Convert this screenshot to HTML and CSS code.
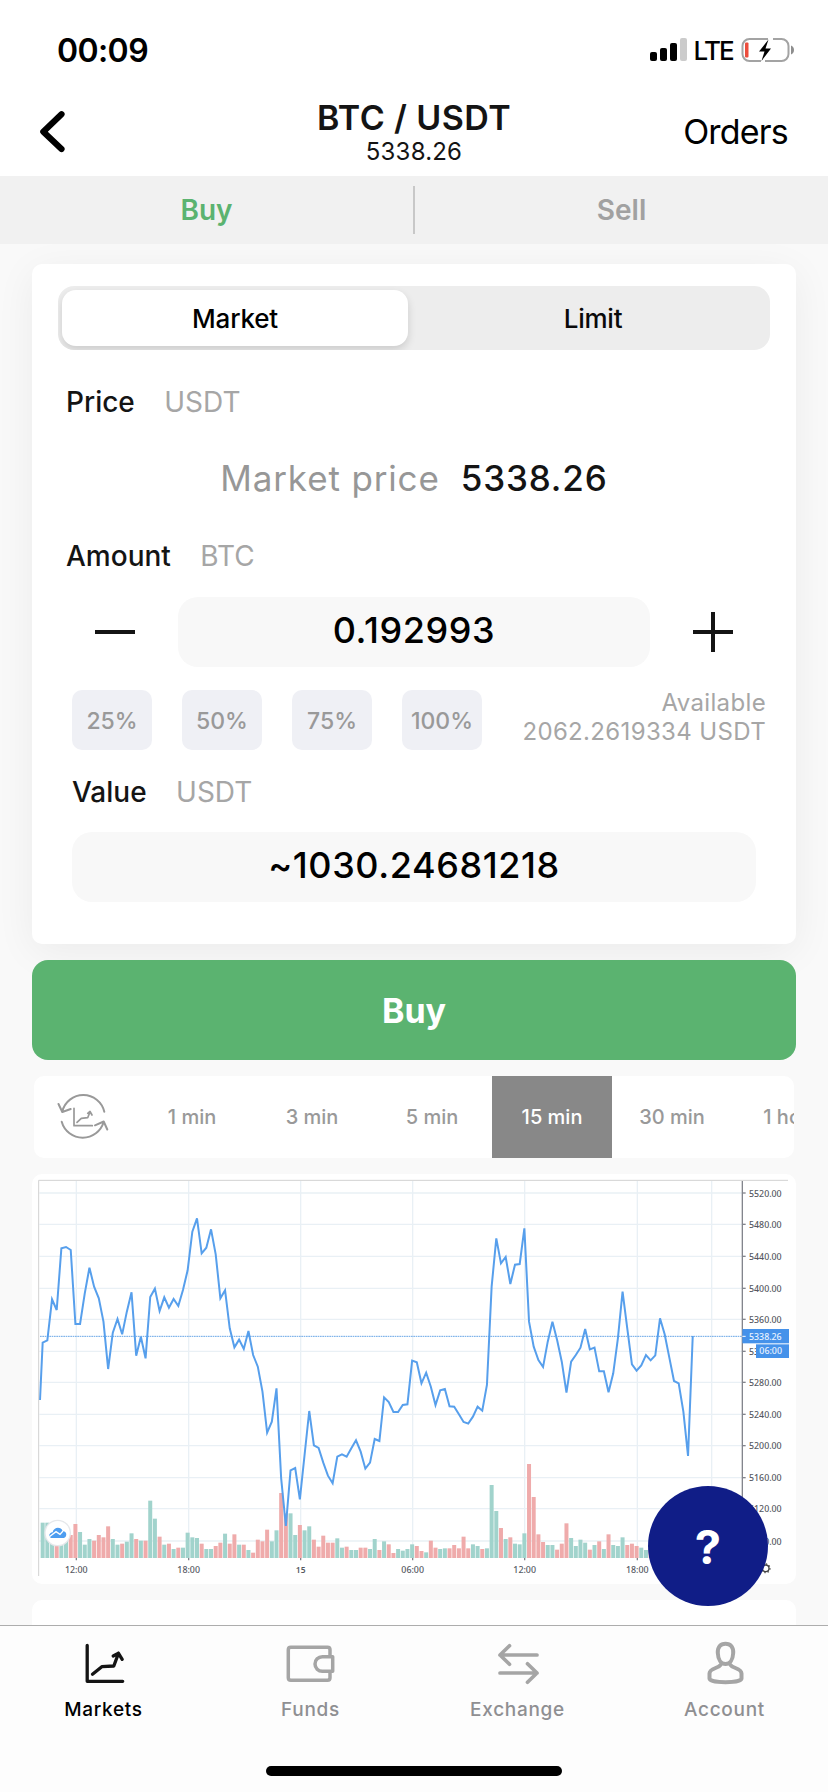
FILE: index.html
```html
<!DOCTYPE html>
<html lang="en">
<head>
<meta charset="UTF-8">
<meta name="viewport" content="width=device-width, initial-scale=1.0">
<title>BTC / USDT</title>
<link rel="stylesheet" href="styles.css">
</head>
<body>

<div class="status-bar">
  <span class="clock">00:09</span>
  <div class="status-icons">
    <svg class="signal" width="37" height="24" viewBox="0 0 37 24">
      <rect x="0" y="14" width="7" height="9" rx="2"/>
      <rect x="10" y="10" width="7" height="13" rx="2"/>
      <rect x="20" y="5" width="7" height="18" rx="2"/>
      <rect x="30" y="0" width="7" height="23" rx="2" fill="#cbcbcb"/>
    </svg>
    <span class="network">LTE</span>
    <svg class="battery" width="54" height="26" viewBox="0 0 54 26">
      <path d="M20 24H8.500a7 7 0 0 1-7-7V9a7 7 0 0 1 7-7H27M32 2h8.500a7 7 0 0 1 7 7v8a7 7 0 0 1-7 7H24" fill="none" stroke="#a3a3a3" stroke-width="2"/>
      <path d="M50 8.500c4 1.500 4 7.500 0 9z" fill="#8e8e8e"/>
      <rect x="4" y="5.500" width="3.500" height="15" rx="1" fill="#ec4d3d"/>
      <path d="M27.500 2.500L18 14.500h5.500L20.500 24 30 11.500h-5.500z" fill="#000"/>
    </svg>
  </div>
</div>

<header class="header">
  <button class="back">
    <svg width="28" height="42" viewBox="0 0 28 42"><path d="M23.500 3.200L5.300 20.700 23.500 38" fill="none" stroke="#000" stroke-width="6.200" stroke-linecap="round" stroke-linejoin="round"/></svg>
  </button>
  <div class="pair">
    <h1>BTC / USDT</h1>
    <p>5338.26</p>
  </div>
  <a class="orders">Orders</a>
</header>

<div class="tabs">
  <div class="tab active">Buy</div>
  <div class="tab">Sell</div>
</div>

<main>
  <section class="card order-form">
    <div class="segmented">
      <div class="segment selected">Market</div>
      <div class="segment">Limit</div>
    </div>

    <div class="label price-label">Price <span>USDT</span></div>
    <div class="market-price"><span class="muted">Market price</span><span class="price">5338.26</span></div>

    <div class="label">Amount <span>BTC</span></div>
    <div class="amount-row">
      <svg width="40" height="40" viewBox="0 0 40 40"><path d="M0 20h40" stroke="#141414" stroke-width="4"/></svg>
      <div class="field amount">0.192993</div>
      <svg width="40" height="40" viewBox="0 0 40 40"><path d="M0 20h40M20 0v40" stroke="#141414" stroke-width="4"/></svg>
    </div>

    <div class="percent-row">
      <div class="percent">25%</div>
      <div class="percent">50%</div>
      <div class="percent">75%</div>
      <div class="percent">100%</div>
      <div class="available"><div>Available</div><div>2062.2619334 USDT</div></div>
    </div>

    <div class="label value-label">Value <span>USDT</span></div>
    <div class="field value">~1030.24681218</div>
  </section>

  <button class="buy">Buy</button>

  <div class="intervals">
    <svg class="refresh" width="98" height="82" viewBox="0 0 98 82" fill="none" stroke="#999" stroke-width="2" stroke-linecap="round" stroke-linejoin="round">
      <path d="M28.300 35.500A21.600 21.600 0 0 1 70.300 35.700M24.500 28l3.800 8 8.400-3M27.700 45.700a21.800 21.800 0 0 0 42 0M61 49.300l8.700-3.800 3.600 8"/>
      <path d="M40 32.300v17.400h18.300M43 46.300l4.300-4 6.400-.6 2.300-5.700M53.700 37.300l2.300-1.800 2 3.500" stroke-width="1.700"/>
    </svg>
    <div class="interval">1 min</div>
    <div class="interval">3 min</div>
    <div class="interval">5 min</div>
    <div class="interval current">15 min</div>
    <div class="interval">30 min</div>
    <div class="interval">1 hour</div>
  </div>

  <div class="card chart-card">
    <svg id="chart" class="chart" viewBox="36 27 2292 1230">
      <g id="grid"></g>
      <g id="volume"></g>
      <path d="M60 514H2167" class="last-line"/>
      <polyline id="line" class="line"/>
      <path d="M56 1233V46H2304" class="frame"/>
      <path d="M2167 48V1179" class="axis"/>
      <g id="labels"></g>
      <rect x="2167" y="492" width="140" height="43" fill="#4592ea"/>
      <rect x="2208" y="538" width="99" height="41" fill="#4592ea"/>
      <path d="M2167 514h10" stroke="#fff" stroke-width="3"/>
      <text x="2187" y="524" textLength="98" lengthAdjust="spacingAndGlyphs" class="tag">5338.26</text>
      <text x="2218" y="568" textLength="68" lengthAdjust="spacingAndGlyphs" class="tag">06:00</text>
      <g class="cloud">
        <circle cx="113" cy="1104" r="40" fill="#e6e8eb"/>
        <circle cx="113" cy="1104" r="36" fill="#fff"/>
        <path d="M94 1119c-9-3-8-16 4-17 3-17 25-18 30-4 8 1 13 7 10 15-2 5-5 6-9 6z" fill="#4d9df0"/>
        <path d="M88 1115l20-15 12 8 9-10" fill="none" stroke="#fff" stroke-width="4"/>
      </g>
      <circle cx="2237" cy="1210" r="10" fill="none" stroke="#444" stroke-width="4"/>
      <circle cx="2237" cy="1210" r="13" fill="none" stroke="#444" stroke-width="4" stroke-dasharray="4 6"/>
    </svg>
  </div>

  <div class="card next-card"></div>
</main>

<button class="help">?</button>

<nav class="tab-bar">
  <div class="items">
    <a class="item active">
      <svg width="48" height="48" viewBox="0 0 48 48"><path d="M7.200 5.500v35.800h35.500M12.500 34.300l9.300-7.600 12-.7 4.700-12.700M33.200 16l5.300-2.700 3.700 6" stroke-width="3.300"/></svg>
      <span>Markets</span>
    </a>
    <a class="item">
      <svg width="50" height="48" viewBox="0 0 50 48"><path d="M44 16v-6.200q0-2.500-2.500-2.500H4.800q-2.500 0-2.500 2.500v28q0 2.500 2.500 2.500h36.700q2.500 0 2.500-2.500V32M46.700 16.700H36.300a7.300 7.300 0 0 0 0 14.600h10.400z" stroke-width="3.500"/></svg>
      <span>Funds</span>
    </a>
    <a class="item">
      <svg width="48" height="48" viewBox="0 0 48 48"><path d="M43 15H6M15.500 5.700L6 15l9.500 9.300M6 33h37M33.500 23.700L43 33l-9.500 9.300" stroke-width="3.700"/></svg>
      <span>Exchange</span>
    </a>
    <a class="item">
      <svg width="48" height="48" viewBox="0 0 48 48"><path d="M24.500 3.700c-5.300 0-8 3.500-7.700 9.300.3 6.800 3.400 11 7.700 11s7.400-4.200 7.700-11c.3-5.800-2.400-9.300-7.700-9.300zM19.500 25c-2 3.500-11 3-11 8.500v5c0 2 7 3.700 16 3.700s16-1.700 16-3.700v-5c0-5.500-9-5-11-8.500" stroke-width="4"/></svg>
      <span>Account</span>
    </a>
  </div>
  <div class="home-indicator"></div>
</nav>

<script src="chart.js"></script>
</body>
</html>
```
FILE: styles.css
```css
* {
  box-sizing: border-box;
}

body {
  margin: 0;
  width: 828px;
  height: 1792px;
  display: flex;
  flex-direction: column;
  position: relative;
  overflow: hidden;
  background-color: #f9f9f9;
  color: #141414;
  font-family: Inter, "Liberation Sans", sans-serif;
}

h1, p {
  margin: 0;
}

button {
  border: none;
  padding: 0;
  font-family: inherit;
}

svg {
  display: block;
}

.status-bar {
  height: 88px;
  padding: 12px 33px 0 57px;
  display: flex;
  justify-content: space-between;
  align-items: center;
  background-color: #fff;
  color: #000;
}

.clock {
  font-size: 32px;
  font-weight: 600;
  letter-spacing: -0.6px;
}

.status-icons {
  display: flex;
  align-items: center;
}

.network {
  font-size: 26px;
  font-weight: 500;
  margin: 0 8px 0 6px;
  letter-spacing: -1.8px;
}

.header {
  height: 88px;
  padding: 2px 40px 0;
  display: grid;
  grid-template-columns: 1fr auto 1fr;
  align-items: center;
  background-color: #fff;
}

.back {
  background: none;
  width: 28px;
  margin: -2px 0 0 -2px;
}

.back svg {
  overflow: visible;
}

.pair {
  text-align: center;
}

.pair h1 {
  font-size: 34px;
  line-height: 38px;
  font-weight: 600;
  letter-spacing: 0.4px;
}

.pair p {
  font-size: 24px;
  line-height: 30px;
  letter-spacing: 0.2px;
}

.orders {
  justify-self: end;
  font-size: 34px;
  letter-spacing: -0.8px;
  color: #000;
  margin-top: -3px;
}

.tabs {
  height: 68px;
  padding: 10px 0;
  display: flex;
  background-color: #f1f1f1;
}

.tab {
  flex: 1;
  display: flex;
  align-items: center;
  justify-content: center;
  font-size: 28px;
  font-weight: 600;
  color: #a1a1a1;
}

.tab.active {
  color: #5bb370;
  border-right: 2px solid #c8c8c8;
}

main {
  height: 1381px;
  padding: 20px 32px 0;
  overflow: hidden;
}

.card {
  background-color: #fff;
  border-radius: 10px;
}

.order-form {
  height: 680px;
  padding: 22px 26px 0;
  box-shadow: 0 8px 40px rgba(0, 0, 0, 0.06);
}

.segmented {
  height: 64px;
  padding: 4px;
  display: flex;
  border-radius: 16px;
  background-color: #ededed;
  overflow: hidden;
}

.segment {
  flex: 1;
  display: flex;
  align-items: center;
  justify-content: center;
  font-size: 26px;
  font-weight: 500;
  letter-spacing: -0.2px;
  color: #0a0a0a;
  padding-left: 12px;
}

.segment.selected {
  flex: 0 0 346px;
  padding: 0;
  background-color: #fff;
  border-radius: 14px;
  box-shadow: 0 4px 8px rgba(0, 0, 0, 0.14);
  color: #000;
}

.label {
  height: 40px;
  line-height: 42px;
  padding-left: 8px;
  font-size: 28px;
  font-weight: 500;
}

.label span {
  margin-left: 22px;
  font-weight: 400;
  color: #a6a6a6;
}

.price-label {
  margin-top: 31px;
}

.market-price {
  height: 114px;
  display: flex;
  align-items: center;
  justify-content: center;
  gap: 21px;
  font-size: 35px;
  letter-spacing: 0.85px;
}

.market-price .muted {
  color: #979797;
}

.market-price .price {
  font-weight: 500;
}

.amount-row {
  margin-top: 22px;
  padding: 0 37px;
  display: flex;
  align-items: center;
  justify-content: space-between;
}

.field {
  height: 70px;
  display: flex;
  align-items: center;
  justify-content: center;
  border-radius: 20px;
  background-color: #f8f8f8;
  color: #000;
  font-size: 36px;
  font-weight: 500;
  letter-spacing: 0.6px;
  padding-bottom: 4px;
}

.amount {
  width: 472px;
}

.percent-row {
  margin-top: 23px;
  padding-left: 14px;
  display: flex;
  gap: 30px;
}

.percent {
  width: 80px;
  height: 60px;
  padding-top: 2px;
  display: flex;
  align-items: center;
  justify-content: center;
  border-radius: 10px;
  background-color: #eff0f5;
  color: #999;
  font-size: 23px;
  font-weight: 500;
}

.available {
  flex: 1;
  padding-right: 4px;
  text-align: right;
  white-space: nowrap;
  font-size: 24px;
  line-height: 29px;
  letter-spacing: 0.35px;
  color: #a6a6a6;
  margin-top: -2px;
}

.value-label {
  margin-top: 21px;
  padding-left: 14px;
}

.value {
  margin: 21px 14px 0;
}

.buy {
  display: block;
  width: 100%;
  height: 100px;
  margin-top: 16px;
  border-radius: 16px;
  background-color: #5bb370;
  color: #fff;
  font-size: 34px;
  font-weight: 700;
}

.intervals {
  height: 82px;
  margin: 16px 2px 0;
  display: flex;
  border-radius: 10px;
  background-color: #fff;
  overflow: hidden;
}

.refresh {
  flex: none;
}

.interval {
  flex: 0 0 120px;
  display: flex;
  align-items: center;
  justify-content: center;
  font-size: 20px;
  font-weight: 500;
  color: #999;
}

.interval.current {
  background-color: #888;
  color: #fff;
}

.chart-card {
  margin-top: 16px;
  height: 410px;
}

.chart {
  width: 764px;
  height: 410px;
  font-family: "Noto Sans", sans-serif;
  font-size: 29px;
  font-weight: 500;
}

.chart .grid {
  stroke: #e9f0f5;
  stroke-width: 4;
}

.chart .line {
  fill: none;
  stroke: #579fec;
  stroke-width: 6;
}

.chart .last-line {
  stroke: #69a6e6;
  stroke-width: 3;
  stroke-dasharray: 5 2;
}

.chart .frame {
  fill: none;
  stroke: #d2d2d2;
  stroke-width: 3;
}

.chart .axis {
  stroke: #83858d;
  stroke-width: 4;
}

.chart .text {
  fill: #565962;
}

.chart .tag {
  fill: #e9f3ff;
}

.next-card {
  height: 60px;
  margin-top: 16px;
}

.help {
  position: absolute;
  left: 648px;
  top: 1486px;
  width: 120px;
  height: 120px;
  border-radius: 50%;
  background-color: #101d87;
  color: #fff;
  font-size: 47px;
  font-weight: 700;
}

.tab-bar {
  height: 167px;
  border-top: 1px solid #adadad;
  background-color: #fdfdfd;
}

.items {
  height: 140px;
  padding-top: 14px;
  display: flex;
}

.item {
  flex: 1;
  display: flex;
  flex-direction: column;
  align-items: center;
  font-size: 19px;
  font-weight: 500;
  letter-spacing: 0.7px;
  color: #8f8f92;
}

.item svg {
  fill: none;
  stroke: #a5a5a5;
  stroke-linecap: round;
  stroke-linejoin: round;
}

.item span {
  margin-top: 10px;
}

.item.active {
  color: #000;
}

.item.active svg {
  stroke: #141414;
}

.home-indicator {
  width: 296px;
  height: 10px;
  margin: 0 auto;
  border-radius: 5px;
  background-color: #000;
}
```
FILE: chart.js
```js
var START = 68;
var STEP = 14.03;
var BASE = 1179;

// y position of every 15 min close
var closes = [
  533, 526, 403, 435, 250, 246, 255, 477, 477, 385, 308, 365, 400, 470, 612, 503, 462, 508, 440, 382,
  572, 515, 580, 396, 371, 438, 397, 428, 402, 423, 375, 316, 200, 160, 265, 248, 193, 268, 400, 376,
  490, 547, 524, 552, 498, 570, 605, 680, 803, 770, 670, 940, 1083, 916, 909, 1003, 870, 738, 841, 849,
  893, 932, 955, 875, 868, 875, 850, 826, 860, 911, 893, 822, 828, 697, 711, 741, 741, 720, 718, 587,
  592, 655, 623, 665, 720, 676, 672, 724, 725, 748, 771, 776, 755, 725, 737, 660, 365, 220, 295, 276,
  357, 299, 297, 190, 470, 545, 585, 606, 530, 470, 525, 590, 683, 590, 570, 548, 492, 553, 548, 619,
  619, 682, 625, 520, 380, 490, 598, 617, 601, 570, 586, 571, 460, 508, 578, 648, 655, 740, 873, 513
];

// volume bars, negative means the candle closed down
var volumes = [
  106, 106, 106, -69, 111, 79, -69, -102, 78, 40, 57, -52, -69, -62, -95, 57, 40, -43, 49, 74,
  -57, 52, -52, 172, 118, -64, 40, -43, 27, -31, 31, 76, 62, 60, -43, 27, 27, -36, -46, 73,
  -43, -71, 40, -40, 24, -16, -55, -50, -85, 50, 83, -195, -134, 134, 69, -99, 83, 95, -55, -34,
  -67, -46, -46, 59, 31, -34, 24, 24, -31, -31, 27, 57, -24, 50, -41, -15, 27, 22, 27, 41,
  -36, -21, 17, -52, -31, 27, 29, -29, -39, -29, -64, -29, 41, 36, -27, 29, 219, 141, -90, 57,
  -62, 43, 41, 74, -282, -183, -71, -48, 39, 39, -25, -43, -104, 60, 36, 55, 46, -25, 39, -50,
  27, -71, 39, 36, 62, -39, -43, -36, 31, 24, -29, 30, 40, -36, -30, -44, 28, -50, -60, 45
];

var prices = [84, 178, 274, 370, 463, 559, 652, 748, 842, 938, 1031, 1128];
var times = [[169, "12:00"], [506, "18:00"], [842, "15"], [1178, "06:00"], [1514, "12:00"], [1852, "18:00"], [2075, ""]];

var grid = "";
var labels = "";

prices.forEach(function(y, i) {
  grid += '<path class="grid" d="M58 ' + y + 'H2167"/>';
  labels += '<path class="axis" d="M2167 ' + y + 'h10"/>';
  labels += '<text class="text" x="2187" y="' + (y + 11) + '" textLength="98" lengthAdjust="spacingAndGlyphs">' + (5520 - i * 40) + '.00</text>';
});

times.forEach(function(t) {
  grid += '<path class="grid" d="M' + t[0] + ' 48V1179"/>';
  if (t[1]) {
    var w = t[1].length > 2 ? 68 : 29;
    labels += '<path class="axis" d="M' + t[0] + ' 1179v7"/>';
    labels += '<text class="text" x="' + (t[0] - w / 2) + '" y="1223" textLength="' + w + '" lengthAdjust="spacingAndGlyphs"' + (w < 60 ? ' font-weight="600"' : '') + '>' + t[1] + '</text>';
  }
});

var bars = volumes.map(function(v, i) {
  var h = Math.abs(v);
  var color = v < 0 ? "#efabab" : "#a1d3cc";
  return '<rect x="' + (START + STEP * i - 6).toFixed(1) + '" y="' + (BASE - h) + '" width="12" height="' + h + '" fill="' + color + '"/>';
}).join("");

var points = ["60,705"].concat(closes.map(function(y, i) {
  return (START + STEP * i).toFixed(1) + "," + y;
}));

document.getElementById("grid").innerHTML = grid;
document.getElementById("labels").innerHTML = labels;
document.getElementById("volume").innerHTML = bars;
document.getElementById("line").setAttribute("points", points.join(" "));
```
